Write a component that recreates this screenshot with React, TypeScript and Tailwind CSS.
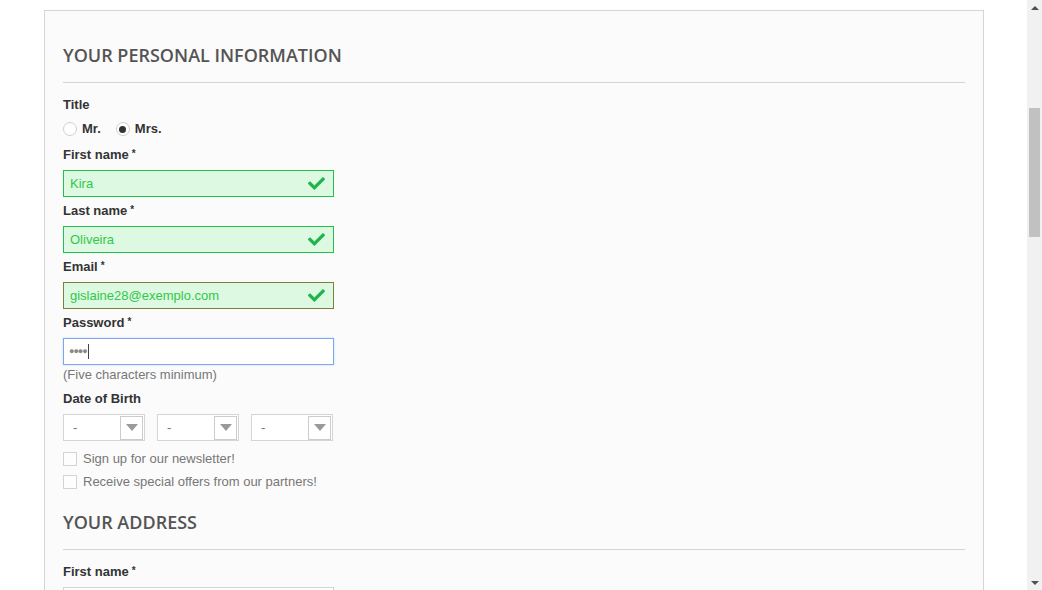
import { FaCheck } from 'react-icons/fa'

const ARIAL = { fontFamily: '"Liberation Sans", Arial, sans-serif' }

function Label({ text, required }: { text: string; required?: boolean }) {
  return (
    <div className="h-[18px] leading-[18px] text-[13px] font-bold text-[#333]">
      {text}
      {required && <sup className="ml-[3px] text-[10px] relative -top-[2px]">*</sup>}
    </div>
  )
}

function OkInput({ value, olive }: { value: string; olive?: boolean }) {
  return (
    <div
      className={`mt-[6px] w-[271px] h-[27px] flex items-center justify-between pl-[6px] pr-[7px] bg-[#ddf9e1] border ${
        olive ? 'border-[#7f7f3c]' : 'border-[#1fc24c]'
      }`}
    >
      <span className="text-[13px] text-[#30c84a]">{value}</span>
      <FaCheck className="text-[#1db54c] w-[19px] h-[17px]" />
    </div>
  )
}

function Select() {
  return (
    <div className="w-[82px] h-[27px] border border-[#d6d4d4] bg-white flex items-center justify-between pl-[9px] pr-[1px]">
      <span className="text-[13px] text-[#777]">-</span>
      <span className="w-[23px] h-[24px] border border-[#ccc] bg-white flex items-center justify-center">
        <span className="w-0 h-0 border-l-[6px] border-r-[6px] border-t-[7px] border-l-transparent border-r-transparent border-t-[#9a9a9a]" />
      </span>
    </div>
  )
}

function Check({ text }: { text: string }) {
  return (
    <div className="h-[23px] flex items-center gap-[6px]">
      <span className="w-[14px] h-[14px] border border-[#d4d4d4] bg-[#fdfdfd]" />
      <span className="text-[13px] text-[#777]">{text}</span>
    </div>
  )
}

function Heading({ text }: { text: string }) {
  return (
    <h3
      className="uppercase text-[18px] font-semibold text-[#555454] leading-[24px] pb-[15px] border-b border-[#d6d4d4]"
      style={{ fontFamily: '"Open Sans", sans-serif' }}
    >
      {text}
    </h3>
  )
}

export default function App() {
  return (
    <div className="h-[590px] w-[1042px] flex overflow-hidden bg-white" style={ARIAL}>
      <main className="flex-1 pl-[44px] pt-[10px]">
        <div className="w-[940px] h-[600px] border border-[#d6d4d4] bg-[#fbfbfb] px-[18px] pt-[32px]">
          <Heading text="Your personal information" />

          <div className="mt-[13px]">
            <Label text="Title" />
            <div className="h-[30px] flex items-center text-[13px] font-bold text-[#333]">
              <span className="w-[14px] h-[14px] rounded-full border border-[#d0d0d0] bg-white" />
              <span className="ml-[5px]">Mr.</span>
              <span className="ml-[15px] w-[14px] h-[14px] rounded-full border border-[#d0d0d0] bg-white flex items-center justify-center">
                <span className="w-[7px] h-[7px] rounded-full bg-[#333]" />
              </span>
              <span className="ml-[5px]">Mrs.</span>
            </div>
          </div>

          <div className="mt-[2px]">
            <Label text="First name" required />
            <OkInput value="Kira" />
          </div>
          <div className="mt-[5px]">
            <Label text="Last name" required />
            <OkInput value="Oliveira" />
          </div>
          <div className="mt-[5px]">
            <Label text="Email" required />
            <OkInput value="gislaine28@exemplo.com" olive />
          </div>
          <div className="mt-[5px]">
            <Label text="Password" required />
            <div className="mt-[6px] w-[271px] h-[27px] flex items-center pl-[5px] bg-white border border-[#7fa6ee] shadow-[0_0_2px_rgba(102,175,233,0.4)]">
              <span className="text-[9px] tracking-[-1px] text-[#888]">●●●●</span>
              <span className="ml-[1px] w-px h-[15px] bg-[#444]" />
            </div>
            <div className="mt-[1px] h-[18px] leading-[18px] text-[13px] text-[#777]">(Five characters minimum)</div>
          </div>

          <div className="mt-[6px]">
            <Label text="Date of Birth" />
            <div className="mt-[6px] flex gap-[12px]">
              <Select />
              <Select />
              <Select />
            </div>
          </div>

          <div className="mt-[6px]">
            <Check text="Sign up for our newsletter!" />
            <Check text="Receive special offers from our partners!" />
          </div>

          <div className="mt-[17px]">
            <Heading text="Your address" />
          </div>
          <div className="mt-[13px]">
            <Label text="First name" required />
            <div className="mt-[6px] w-[271px] h-[27px] bg-white border border-[#d6d4d4]" />
          </div>
        </div>
      </main>

      <aside className="w-[15px] h-full bg-[#f1f1f1] flex flex-col items-center">
        <div className="h-[15px] flex items-center justify-center">
          <span className="w-0 h-0 border-l-[4px] border-r-[4px] border-b-[4px] border-l-transparent border-r-transparent border-b-[#505050]" />
        </div>
        <div className="mt-[93px] w-[11px] h-[129px] bg-[#c1c1c1]" />
        <div className="flex-1" />
        <div className="h-[15px] flex items-center justify-center">
          <span className="w-0 h-0 border-l-[4px] border-r-[4px] border-t-[4px] border-l-transparent border-r-transparent border-t-[#505050]" />
        </div>
      </aside>
    </div>
  )
}
